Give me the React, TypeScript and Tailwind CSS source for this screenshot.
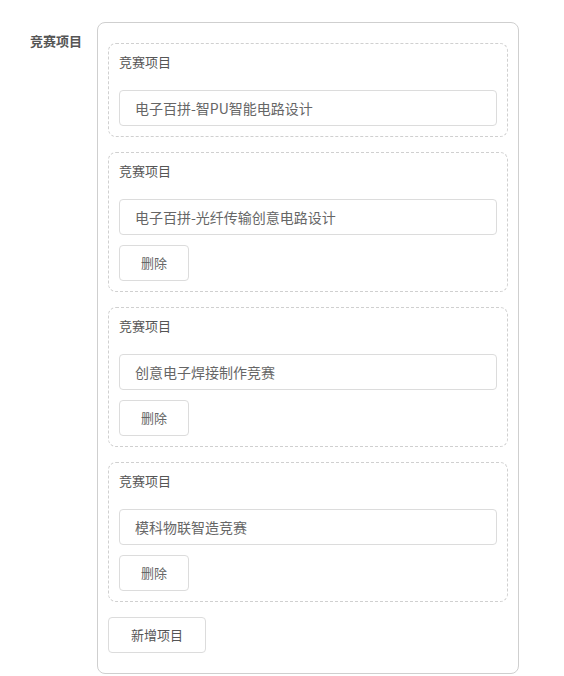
const projects = [
  { name: '电子百拼-智PU智能电路设计', removable: false },
  { name: '电子百拼-光纤传输创意电路设计', removable: true },
  { name: '创意电子焊接制作竞赛', removable: true },
  { name: '模科物联智造竞赛', removable: true },
]

const ProjectCard = ({ name, removable }: { name: string; removable: boolean }) => {
  return (
    <div className="rounded-lg border border-dashed border-[#d0d0d0] p-[10px]">
      <div className="mb-[20px] text-[13px] leading-4 text-[#555]">竞赛项目</div>
      <div className="flex h-9 items-center rounded border border-[#dcdcdc] pl-[15px] text-sm text-[#666]">
        {name}
      </div>
      {removable && (
        <button className="mt-[10px] h-9 w-[70px] rounded border border-[#dcdcdc] bg-white text-[13px] text-[#666]">
          删除
        </button>
      )}
    </div>
  )
}

export default function App() {
  return (
    <div
      className="min-h-[676px] bg-white pl-[30px] pt-[22px]"
      style={{ fontFamily: '"Noto Sans CJK SC", "Noto Sans", sans-serif' }}
    >
      <div className="flex">
        <div className="mt-[10px] w-[67px] text-[13px] font-bold leading-[18px] text-[#555]">竞赛项目</div>
        <div className="flex w-[422px] flex-col gap-[15px] rounded-lg border border-[#cfcfcf] px-[10px] pb-[20px] pt-[20px]">
          {projects.map((p) => (
            <ProjectCard key={p.name} name={p.name} removable={p.removable} />
          ))}
          <button className="h-9 w-[98px] rounded border border-[#dcdcdc] bg-white text-[13px] text-[#555]">
            新增项目
          </button>
        </div>
      </div>
    </div>
  )
}
